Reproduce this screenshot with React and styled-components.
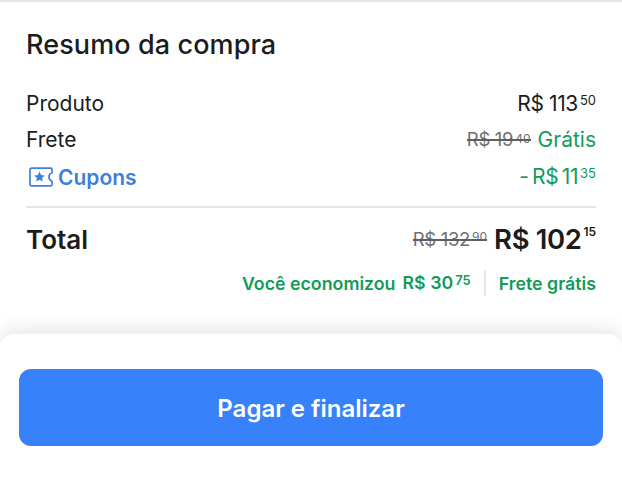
import React from 'react';
import styled, { createGlobalStyle } from 'styled-components';

const Global = createGlobalStyle`
  html, body { margin: 0; padding: 0; background: #fff; }
  #root { width: 622px; height: 500px; overflow: hidden; }
`;
const Page = styled.div`
  width: 622px; height: 500px; display: flex; flex-direction: column;
  font-family: Inter, "Liberation Sans", sans-serif; color: #1c1c1c; background: #fff;
  border-top: 2px solid #e6e6e6; box-sizing: border-box;
`;
const Summary = styled.section`
  height: 332px; box-sizing: border-box; padding: 27px 26px 0;
  display: flex; flex-direction: column;
`;
const Title = styled.h1`
  margin: 0 0 25px; font-size: 27px; line-height: 32px; font-weight: 500; letter-spacing: 0.1px;
`;
const Row = styled.div`
  display: flex; justify-content: space-between; align-items: center;
  height: ${p => p.$h || 35}px; font-size: 21px;
`;
const Label = styled.span`
  letter-spacing: 0;
`;
const CouponLabel = styled.span`
  display: flex; align-items: center; gap: 5px; color: #3f7fdc; font-weight: 600;
  margin-left: 3px; font-size: 21px;
`;
const Price = styled.span`
  display: inline-flex; align-items: flex-start; line-height: 26px; color: ${p => p.$color || 'inherit'};
  font-weight: ${p => p.$weight || 400}; font-size: ${p => p.$size || 21}px; letter-spacing: -0.4px;
  word-spacing: ${p => p.$tight ? '-2px' : '0'};
`;
const Cents = styled.sup`
  font-size: ${p => p.$size || 13}px; line-height: 1; margin: ${p => p.$top ?? 3}px 0 0 2px; vertical-align: baseline;
  font-weight: inherit; letter-spacing: 0;
`;
const OldPrice = styled.span`
  display: inline-flex; position: relative; font-size: ${p => p.$size || 18.5}px; color: #6f6f6f; line-height: 26px;
  margin-right: ${p => p.$gap || 7}px; letter-spacing: -0.3px;
  &::after { content: ''; position: absolute; left: 0; right: 0; top: 50%; height: 1.5px; background: #5f5f5f; }
`;
const Green = styled.span`
  color: #129c58; font-size: 21px;
`;
const Values = styled.span`
  display: inline-flex; align-items: center;
`;
const Divider = styled.hr`
  margin: 9px 0 0; border: 0; height: 2px; background: #e4e4e4; width: 100%;
`;
const TotalLabel = styled.span`
  font-size: 26px; font-weight: 600;
`;
const Savings = styled.div`
  display: flex; justify-content: flex-end; align-items: center; height: 26px;
  color: #129c58; font-size: 17.8px; font-weight: 600;
`;
const SavePrice = styled.span`
  display: inline-flex; align-items: flex-start; margin-left: 7px; line-height: 22px;
`;
const Sep = styled.span`
  flex: none; width: 2px; height: 26px; background: #e6e6e6; margin: 0 13px;
`;
const Sheet = styled.footer`
  flex: 1; background: #fff; border-radius: 14px 14px 0 0; padding: 35px 19px 0;
  box-shadow: 0 -6px 18px rgba(0,0,0,0.09);
`;
const PayButton = styled.button`
  width: 100%; height: 77px; border: 0; border-radius: 12px; background: #3781fb; color: #fff;
  font-family: inherit; font-size: 24px; font-weight: 600; padding: 2px 0 0;
`;

const Ticket = () => (
  <svg width="24" height="20" viewBox="0 0 24 20" fill="none">
    <path d="M2.8 1.2H21.6C22.4 1.2 23 1.8 23 2.6V5.8C21.2 6.4 20 8 20 10C20 12 21.2 13.6 23 14.2V17.4C23 18.2 22.4 18.8 21.6 18.8H2.8C1.8 18.8 1 18 1 17V3C1 2 1.8 1.2 2.8 1.2Z" stroke="#3f7fdc" strokeWidth="1.7" strokeLinejoin="round"/>
    <path d="M10.5 4.6L12.1 8L15.8 8.4L13 10.9L13.8 14.6L10.5 12.7L7.2 14.6L8 10.9L5.2 8.4L8.9 8Z" fill="#3f7fdc"/>
  </svg>
);

export default function App() {
  return (
    <Page>
      <Global />
      <Summary>
        <Title>Resumo da compra</Title>
        <Row>
          <Label>Produto</Label>
          <Price>R$ 113<Cents>50</Cents></Price>
        </Row>
        <Row $h={36}>
          <Label>Frete</Label>
          <Values>
            <OldPrice>R$ 19<Cents $size={12} $top={7}>40</Cents></OldPrice>
            <Green>Grátis</Green>
          </Values>
        </Row>
        <Row $h={40}>
          <CouponLabel><Ticket />Cupons</CouponLabel>
          <Price $color="#129c58" $tight>- R$ 11<Cents>35</Cents></Price>
        </Row>
        <Divider />
        <Row $h={62}>
          <TotalLabel>Total</TotalLabel>
          <Values>
            <OldPrice $gap={7}>R$ 132<Cents $size={12} $top={5}>90</Cents></OldPrice>
            <Price $size={27.5} $weight={600}>R$ 102<Cents $size={12} $top={0}>15</Cents></Price>
          </Values>
        </Row>
        <Savings>
          Você economizou
          <SavePrice>R$ 30<Cents $size={13} $top={2}>75</Cents></SavePrice>
          <Sep />
          Frete grátis
        </Savings>
      </Summary>
      <Sheet>
        <PayButton>Pagar e finalizar</PayButton>
      </Sheet>
    </Page>
  );
}
